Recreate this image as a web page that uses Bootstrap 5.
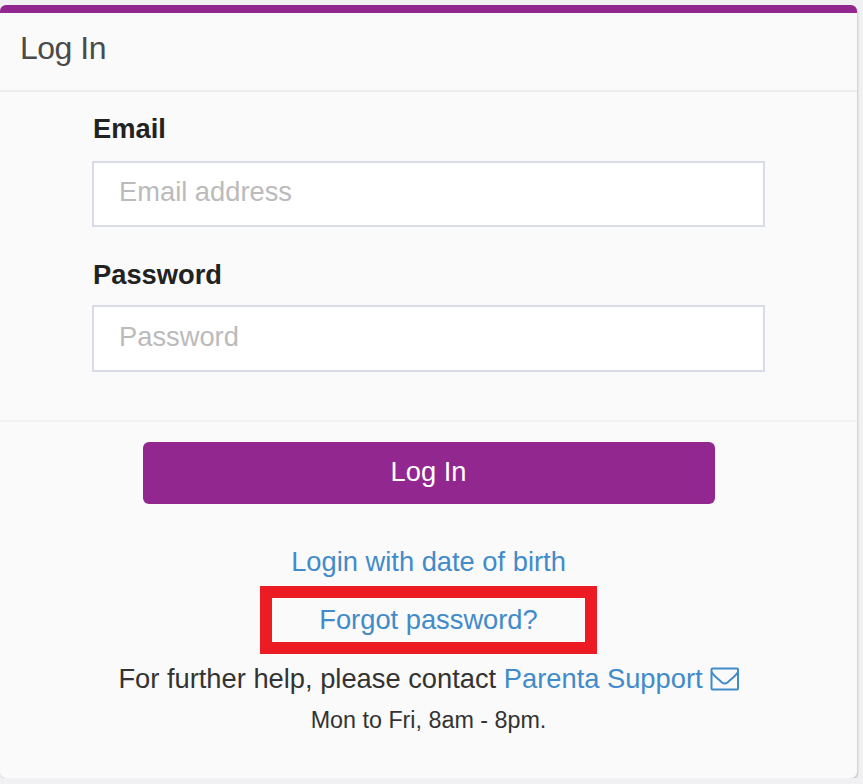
<!DOCTYPE html>
<html lang="en">
<head>
<meta charset="utf-8">
<meta name="viewport" content="width=device-width, initial-scale=1">
<title>Log In</title>
<link href="https://cdn.jsdelivr.net/npm/bootstrap@5.3.0/dist/css/bootstrap.min.css" rel="stylesheet">
<style>
body{background:#f1f0f2;font-family:"Liberation Sans",Arial,sans-serif;font-size:27.3px;line-height:36px;color:#333;overflow:hidden}
.login-panel{width:857px;height:773px;margin-top:5px;background:#fafafa;border:0;border-top:8px solid #92278f;border-radius:6px;box-shadow:1px 2px 2px rgba(0,0,0,.16)}
.login-panel .card-header{height:79px;padding:0 20px;background:transparent;border-bottom:2px solid #eee;font-size:32px;letter-spacing:-.5px;line-height:70px;color:#4a4a4a}
.login-panel .card-body{padding:19px 92px 0;flex:0 0 328px}
.login-panel .form-label{margin:0 0 14px 1px;line-height:36px;color:#222;display:block}
.login-panel .form-control{height:66px;padding:0 25px 5px;border:2px solid #d9dce6;border-radius:0;font-size:27.3px;background:#fff}
.login-panel .form-control::placeholder{color:#bbb;opacity:1}
.second-field{margin-top:30px}
.login-panel .second-field .form-label{margin-bottom:12px}
.login-panel .second-field .form-control{height:67px;padding-bottom:3px}
.login-panel .card-footer{background:transparent;border-top:2px solid #f3f3f3;padding:20px 0 0}
.btn-login,.btn-login:hover{width:572px;height:62px;padding:0 0 3px;border:0;border-radius:6px;background:#92278f;color:#fff;font-size:27.3px;line-height:59px;margin-bottom:40px}
.login-panel a{color:#428bca;text-decoration:none}
.callout{width:337px;height:68px;border:12px solid #ed1c24;margin:6px 0 7px;line-height:44px}
.envelope{width:29px;height:24px;margin-left:7px;display:block}
.hours{font-size:23.3px;line-height:30px;margin-top:8px}
</style>
</head>
<body>
<main class="card login-panel">
  <div class="card-header">Log In</div>
  <form class="card-body">
    <div>
      <label class="form-label fw-bold" for="email">Email</label>
      <input class="form-control shadow-none" id="email" type="email" placeholder="Email address">
    </div>
    <div class="second-field">
      <label class="form-label fw-bold" for="password">Password</label>
      <input class="form-control shadow-none" id="password" type="password" placeholder="Password">
    </div>
  </form>
  <div class="card-footer d-flex flex-column align-items-center text-center">
    <button class="btn btn-login" type="button">Log In</button>
    <a href="#">Login with date of birth</a>
    <div class="callout"><a href="#">Forgot password?</a></div>
    <div class="d-flex align-items-center text-nowrap">
      <span>For further help, please contact <a href="#">Parenta Support</a></span>
      <a href="#" aria-label="Email support"><svg class="envelope" viewBox="0 0 29 24" fill="none" stroke="currentColor" stroke-width="2"><rect x="1.500" y="1.500" width="26.500" height="21" rx="1"/><path d="M1.500 5C4 9.500 9 12.500 12 15.500Q14.700 17.600 17.500 15.500C20.500 12.500 25.500 9.500 28 5"/></svg></a>
    </div>
    <div class="hours">Mon to Fri, 8am - 8pm.</div>
  </div>
</main>
<script src="https://cdn.jsdelivr.net/npm/bootstrap@5.3.0/dist/js/bootstrap.bundle.min.js"></script>
</body>
</html>
